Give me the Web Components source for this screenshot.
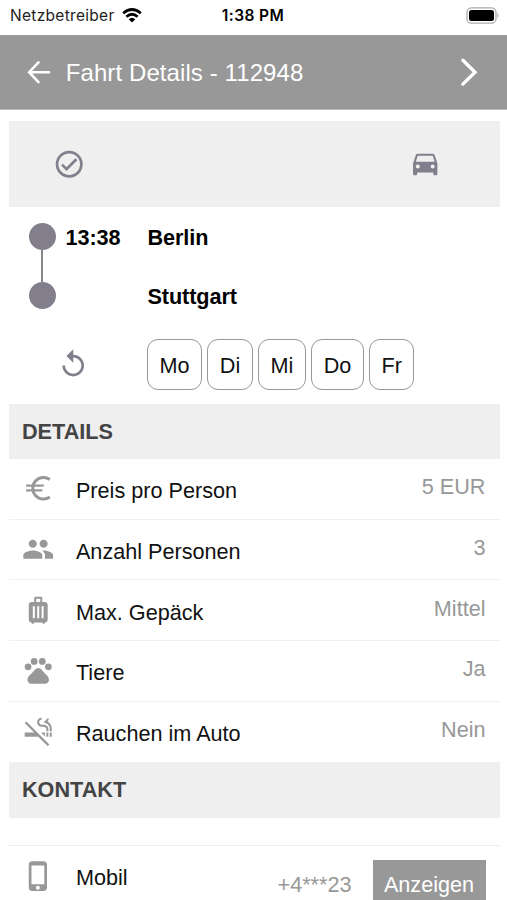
<!DOCTYPE html>
<html lang="de">
<head>
<meta charset="utf-8">
<title>Fahrt Details</title>
<style>
html,body{margin:0;height:900px;overflow:hidden;background:#fff;font-family:"Liberation Sans",Arial,sans-serif;font-size:21.63px;color:#111}
</style>
</head>
<body>
<ride-app></ride-app>
<script>
const define = (name, css, html) => customElements.define(name, class extends HTMLElement {
  constructor() {
    super();
    this.attachShadow({mode: 'open'}).innerHTML = `<style>*{box-sizing:border-box}${css}</style>${html}`;
  }
});

const ICONS = {
  check: '<path d="M16.59 7.58L10 14.17l-2.59-2.58L6 13l4 4 8-8zM12 2a10 10 0 1 0 0 20 10 10 0 0 0 0-20zm0 18a8 8 0 1 1 0-16 8 8 0 0 1 0 16z"/>',
  car: '<path d="M18.92 5.21C18.72 4.62 18.16 4.200 17.500 4.200h-11c-.66 0-1.210.42-1.420 1.010L3 11.200v8c0 .55.45 1 1 1h1c.55 0 1-.45 1-1v-1h12v1c0 .55.45 1 1 1h1c.55 0 1-.45 1-1v-8l-2.080-5.990zM6.500 15.200c-.83 0-1.500-.67-1.500-1.500s.67-1.500 1.500-1.500 1.500.67 1.500 1.500-.67 1.500-1.500 1.500zm11 0c-.83 0-1.500-.67-1.500-1.500s.67-1.500 1.500-1.500 1.500.67 1.500 1.500-.67 1.500-1.500 1.500zM5 10.200l1.500-4.500h11l1.500 4.500H5z"/>',
  replay: '<path d="M12 5V1L7 6l5 5V7c3.31 0 6 2.690 6 6s-2.690 6-6 6-6-2.690-6-6H4c0 4.420 3.580 8 8 8s8-3.580 8-8-3.580-8-8-8z"/>',
  euro: '<path d="M20.600 5.500A8 8 0 1 0 20.600 18.500" fill="none" stroke="currentColor" stroke-width="2.200"/><path d="M3 9.300h13.300l-.4 1.700H3zM3 12.700h12.200l-.3 1.700H3z"/>',
  people: '<path d="M16 11c1.660 0 2.990-1.340 2.990-3S17.660 5 16 5s-3 1.340-3 3 1.340 3 3 3zm-8 0c1.660 0 2.990-1.340 2.990-3S9.660 5 8 5 5 6.340 5 8s1.340 3 3 3zm0 2c-2.330 0-7 1.170-7 3.500V19h14v-2.500C15 14.170 10.330 13 8 13zm8 0c-.29 0-.62.02-.97.05 1.160.84 1.970 1.970 1.970 3.450V19h6v-2.500c0-2.330-4.670-3.500-7-3.500z"/>',
  luggage: '<path d="M17 6h-2V3c0-.55-.45-1-1-1h-4c-.55 0-1 .45-1 1v3H7c-1.100 0-2 .9-2 2v11c0 1.100.9 2 2 2 0 .55.45 1 1 1s1-.45 1-1h6c0 .55.45 1 1 1s1-.45 1-1c1.100 0 2-.9 2-2V8c0-1.100-.9-2-2-2zM9.500 18H8V9h1.500v9zm3.250 0h-1.500V9h1.500v9zm.75-12h-3V3.500h3V6zM16 18h-1.500V9H16v9z"/>',
  paw: '<circle cx="4.500" cy="9.500" r="2.500"/><circle cx="9" cy="5.500" r="2.500"/><circle cx="15" cy="5.500" r="2.500"/><circle cx="19.500" cy="9.500" r="2.500"/><path d="M17.340 14.860c-.87-1.020-1.600-1.890-2.480-2.910-.46-.54-1.050-1.080-1.750-1.320-.11-.04-.22-.07-.33-.09-.25-.04-.52-.04-.78-.04s-.53 0-.79.05c-.11.02-.22.05-.33.09-.7.24-1.280.78-1.750 1.320-.87 1.020-1.600 1.890-2.480 2.910-1.310 1.310-2.920 2.760-2.620 4.790.29 1.020 1.020 2.030 2.330 2.320.73.15 3.060-.04 5.540-.04h.18c2.480 0 4.810.18 5.540.04 1.310-.29 2.040-1.310 2.330-2.320.31-2.040-1.300-3.490-2.610-4.800z"/>',
  nosmoke: '<path d="M2 6l6.990 7H2v3h9.990l7 7 1.260-1.250-17-17zm18.500 7H22v3h-1.500zM18 13h1.500v3H18zm.85-8.120c.62-.61 1-1.450 1-2.380h-1.500c0 1.020-.83 1.850-1.850 1.850v1.500c2.240 0 4 1.830 4 4.070V12H22V9.920c0-2.230-1.280-4.150-3.150-5.040zM14.500 8.700h1.530c1.050 0 1.970.74 1.970 2.050V12h1.500v-1.590c0-1.800-1.600-3.160-3.470-3.160H14.500c-1.020 0-1.850-.98-1.850-2s.83-1.750 1.850-1.750V2c-1.850 0-3.350 1.500-3.350 3.350s1.500 3.350 3.350 3.350zm2.500 7.230V13h-2.930z"/>',
  phone: '<path d="M16 1H7.500C6.120 1 5 2.120 5 3.500v17C5 21.880 6.120 23 7.500 23H16c1.380 0 2.500-1.120 2.500-2.500v-17C18.500 2.120 17.380 1 16 1zm-4.250 21c-.83 0-1.500-.67-1.500-1.500s.67-1.500 1.500-1.500 1.500.67 1.500 1.500-.67 1.500-1.500 1.500zm4.750-4H7V4h9.500v14z"/>',
  back: '<path d="M20 12H5.600M12.200 4.700L5.300 12l6.900 7.300" fill="none" stroke="currentColor" stroke-width="1.900" stroke-linecap="round"/>',
  next: '<path d="M7.300 3.200l9 8.800-9 8.800" fill="none" stroke="currentColor" stroke-width="2.500" stroke-linecap="round"/>'
};

customElements.define('ui-icon', class extends HTMLElement {
  connectedCallback() {
    if (!this.shadowRoot) this.attachShadow({mode: 'open'});
    this.shadowRoot.innerHTML = `<style>:host{display:block;width:32.45px;height:32.45px;flex:none}svg{display:block;width:100%;height:100%}</style><svg viewBox="0 0 24 24" fill="currentColor">${ICONS[this.getAttribute('name')]}</svg>`;
  }
});

define('status-bar', `
:host{display:grid;grid-template-columns:1fr auto 1fr;align-items:center;height:35px;padding:0 8px 5px 10px;box-sizing:border-box;font:15.5px/20px Inter,sans-serif;color:#111}
.l{display:flex;align-items:center;gap:7px}.n{letter-spacing:.3px;color:#222;padding-top:1px}.t{font-weight:600;padding:1px 3px 0 0;color:#000;letter-spacing:.4px}.b{justify-self:end}svg{display:block}`,
`<div class="l"><span class="n">Netzbetreiber</span><svg width="20" height="15" viewBox="0 0 20 15" fill="none" stroke="#000" stroke-width="2.700"><path d="M1.200 5.300Q10-2.300 18.800 5.300M4.400 8.700Q10 3.800 15.600 8.700"/><path d="M6.700 11.200Q10 8.200 13.300 11.200L10 14.600z" fill="#000" stroke="none"/></svg></div><span class="t">1:38 PM</span><svg class="b" width="33" height="17" viewBox="0 0 33 17"><rect x="1" y=".8" width="29" height="15.400" rx="4.500" fill="#fff" stroke="#aaa" stroke-width="1.300"/><rect x="3" y="3" width="25" height="11" rx="2.500"/><path d="M31.500 6c1.500 1 1.500 4 0 5z" fill="#aaa"/></svg>`);

define('title-bar', `
:host{display:flex;align-items:center;height:75px;padding:0 22px;background:#989898;color:#fff;box-sizing:border-box;border-bottom:1px solid #bbb;font-size:24px}
.t{flex:1;padding:1px 0 0 11.300px;line-height:30px;white-space:nowrap;letter-spacing:.09px}`,
`<ui-icon name="back"></ui-icon><span class="t"><slot></slot></span><ui-icon name="next"></ui-icon>`);

define('summary-strip', `
:host{display:flex;justify-content:space-between;align-items:center;height:86px;margin-top:11px;padding:0 58.500px 0 44.500px;background:#efefef;color:#827e8c;box-sizing:border-box}`,
`<ui-icon name="check"></ui-icon><ui-icon name="car"></ui-icon>`);

define('ride-route', `
:host{display:grid;grid-template-columns:27px 1fr;column-gap:9px;height:132px;padding:15.500px 0 0 20px;box-sizing:border-box;color:#000}
.rail{display:flex;flex-direction:column;align-items:center}
i{width:27px;height:27px;border-radius:50%;background:#827e8c}b{width:2.400px;height:32.500px;background:#87858c}
.stops{display:flex;flex-direction:column;gap:32.500px;padding-left:1px}
.stop{display:grid;grid-template-columns:82px 1fr;height:27px;line-height:29px;font-weight:bold;letter-spacing:-.08px}`,
`<div class="rail"><i></i><b></b><i></i></div><div class="stops"><div class="stop"><span>13:38</span><span>Berlin</span></div><div class="stop"><span></span><span>Stuttgart</span></div></div>`);

define('week-days', `
:host{display:flex;align-items:center;height:51px;padding-left:48px;margin-bottom:14px;color:#827e8c}
.d{display:flex;gap:5.500px;padding-left:58.200px}`,
`<ui-icon name="replay"></ui-icon><div class="d"><slot></slot></div>`);

define('day-chip', `
:host{display:block;height:51.500px;line-height:51px;padding:0 11.400px;border:1.500px solid #989898;border-radius:11px;box-sizing:border-box;color:#111}`, `<slot></slot>`);

define('section-head', `
:host{display:flex;align-items:center;height:55.300px;padding-left:13.500px;background:#efefef;color:#444;font-weight:bold;box-sizing:border-box}`, `<slot></slot>`);

customElements.define('detail-row', class extends HTMLElement {
  connectedCallback() {
    if (this.shadowRoot) return;
    this.attachShadow({mode: 'open'}).innerHTML = `<style>
:host{display:flex;height:60.600px;padding:13.200px 14px 0 13.500px;box-sizing:border-box;border-bottom:1.500px solid #f1f1f1;color:#989898}
:host([last]){border-bottom-color:transparent}
.label{padding-left:21.500px;flex:1;line-height:37.500px;color:#111}
.value{line-height:29px}
</style><ui-icon name="${this.getAttribute('icon')}"></ui-icon><span class="label">${this.getAttribute('label')}</span><span class="value"><slot></slot></span>`;
  }
});

define('contact-row', `
:host{display:flex;height:90px;padding:14px 14px 0 13px;box-sizing:border-box;border-top:1.500px solid #ececec;color:#989898;margin-top:27.500px}
.label{flex:1;padding-left:22px;line-height:36px;color:#111}
.num{line-height:50px;padding-right:21px}
button{all:unset;box-sizing:border-box;width:113px;height:50px;background:#989898;color:#fff;text-align:center;line-height:50px}`,
`<ui-icon name="phone"></ui-icon><span class="label">Mobil</span><span class="num">+4***23</span><button>Anzeigen</button>`);

define('ride-app', `
:host{display:block;width:507px;height:900px;overflow:hidden;background:#fff}
main{padding:0 7.500px 0 8.500px}`,
`<status-bar></status-bar><title-bar>Fahrt Details - 112948</title-bar>
<main>
<summary-strip></summary-strip>
<ride-route></ride-route>
<week-days><day-chip>Mo</day-chip><day-chip>Di</day-chip><day-chip>Mi</day-chip><day-chip>Do</day-chip><day-chip>Fr</day-chip></week-days>
<section-head>DETAILS</section-head>
<detail-row icon="euro" label="Preis pro Person">5 EUR</detail-row>
<detail-row icon="people" label="Anzahl Personen">3</detail-row>
<detail-row icon="luggage" label="Max. Gepäck">Mittel</detail-row>
<detail-row icon="paw" label="Tiere">Ja</detail-row>
<detail-row icon="nosmoke" label="Rauchen im Auto" last>Nein</detail-row>
<section-head>KONTAKT</section-head>
<contact-row></contact-row>
</main>`);
</script>
</body>
</html>
